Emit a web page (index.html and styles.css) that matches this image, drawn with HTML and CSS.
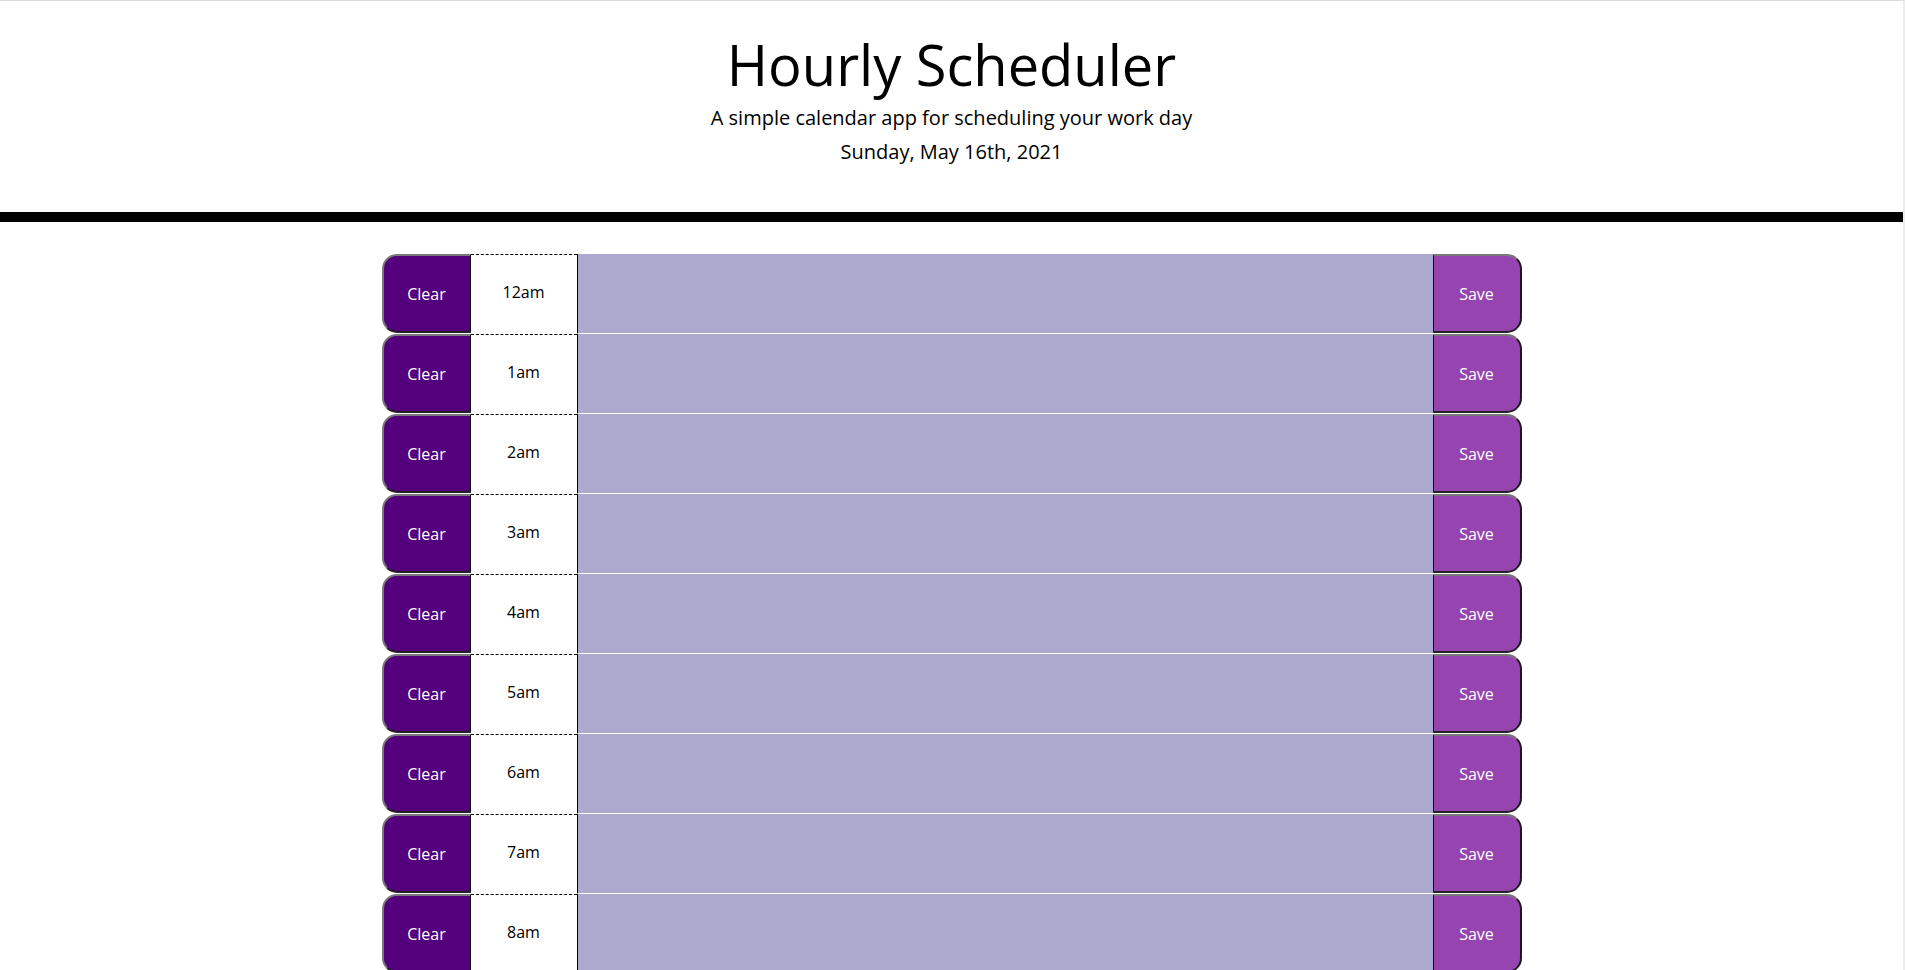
FILE: index.html
```html
<!DOCTYPE html>
<html>

<head>
    <title>Hourly Scheduler</title>
    <meta charset="utf-8">
    <meta name="viewport" content="width=device-width, initial-scale=1">
    <link rel="stylesheet" href="styles.css">
</head>

<body>
<header class="jumbotron">
    <h1 class="display-4">Hourly Scheduler</h1>
    <p class="lead">A simple calendar app for scheduling your work day</p>
    <p id="currentDay" class="lead-date">Sunday, May 16th, 2021</p>
</header>

<div class="container" id="schedule"></div>

<script>
        // Build one row per hour
        const hours = ['12am', '1am', '2am', '3am', '4am', '5am', '6am', '7am', '8am', '9am', '10am', '11am',
            '12pm', '1pm', '2pm', '3pm', '4pm', '5pm', '6pm', '7pm', '8pm', '9pm', '10pm', '11pm'];
        const schedule = document.getElementById('schedule');
        hours.forEach(function (hour, i) {
            const row = document.createElement('div');
            row.className = 'time-block';
            row.id = 'hour-' + i;
            row.innerHTML =
                '<button class="clearBtn">Clear</button>' +
                '<div class="hour">' + hour + '</div>' +
                '<textarea class="description past"></textarea>' +
                '<button class="saveBtn">Save</button>';
            schedule.appendChild(row);
        });
    </script>
</body>

</html>
```

FILE: styles.css
```css
body {
    margin: 0;
    min-height: 100vh;
    background-color: #ffffff;
    font-family: "Open Sans", "Liberation Sans", sans-serif;
    color: #000000;
    border-top: 1px solid #dcdcdc;
    border-right: 2px solid #ececec;
}

.jumbotron {
    text-align: center;
    padding: 30px 0 45px;
    border-bottom: 10px solid #000000;
}

.display-4 {
    margin: 0 0 5px;
    font-size: 56px;
    font-weight: 400;
    line-height: 1.2;
}

.lead {
    margin: 0 0 4px;
    font-size: 20px;
    line-height: 30px;
}

.lead-date {
    margin: 0;
    font-size: 20px;
    line-height: 30px;
}

.container {
    width: 1140px;
    margin: 32px auto 0;
}

.time-block {
    display: grid;
    grid-template-columns: 89px 106px 1fr 89px;
    height: 80px;
}

.hour {
    display: flex;
    align-items: center;
    justify-content: center;
    padding-bottom: 6px;
    border-top: 1px dashed #000000;
    font-size: 16px;
    color: #000000;
    background-color: #ffffff;
}

.description {
    margin: 0;
    padding: 10px;
    resize: none;
    border: none;
    border-left: 1px solid #000000;
    border-bottom: 1px solid #ffffff;
    font-family: inherit;
    font-size: 16px;
}

.past {
    background-color: #aca9ce;
}

.clearBtn,
.saveBtn {
    height: 79px;
    margin: 0;
    padding: 0;
    font-family: inherit;
    font-size: 16px;
    color: #ffffff;
    border-width: 2px;
    border-style: solid;
    cursor: pointer;
}

.clearBtn {
    background-color: #54007d;
    border-color: #787878 #111111 #222222 #787878;
    border-right-width: 1px;
    border-top-left-radius: 15px;
    border-bottom-left-radius: 15px;
}

.saveBtn {
    background-color: #9645b0;
    border-color: #787878 #1a1a1a #222222 #000000;
    border-left-width: 1px;
    border-top-right-radius: 15px;
    border-bottom-right-radius: 15px;
}
```
